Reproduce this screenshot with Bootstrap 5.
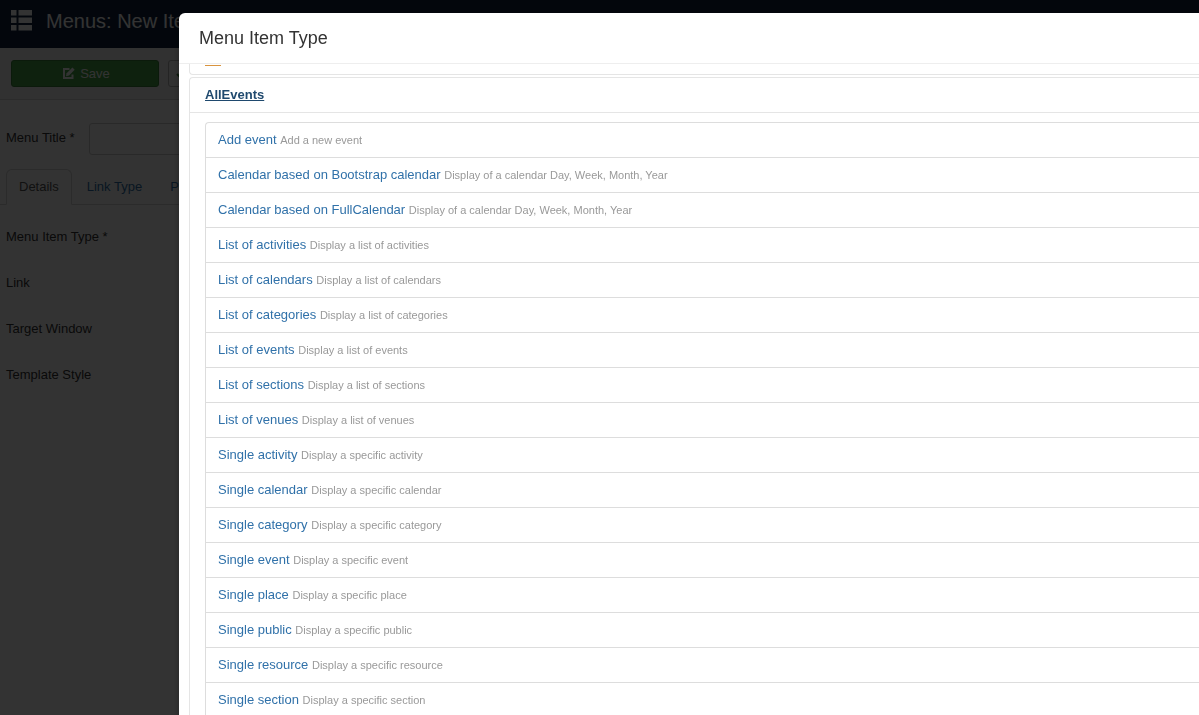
<!DOCTYPE html>
<html lang="en">
<head>
<meta charset="utf-8">
<meta name="viewport" content="width=device-width, initial-scale=1">
<title>Menus: New Item</title>
<link href="https://cdn.jsdelivr.net/npm/bootstrap@5.3.0/dist/css/bootstrap.min.css" rel="stylesheet">
<style>
  body { font: 13px/18px "Liberation Sans", Arial, sans-serif; color: #333; overflow: hidden; }
  a { color: #3071a9; text-decoration: none; }
  .page { height: 100vh; overflow: hidden; }
  .page-header { height: 48px; padding: 0 10px 6px; gap: 14px; background: #10223e; color: #fff; }
  .page-title { font-size: 20px; line-height: 24px; color: #fff; font-weight: 400; }
  .toolbar { height: 52px; padding: 12px 11px; gap: 9px; background: #f5f5f5; border-bottom: 1px solid #d4d4d4; }
  .toolbar .btn { height: 27px; font-size: 13px; line-height: 18px; border-radius: 3px; }
  .btn-save { width: 148px; padding: 0 10px 0 12px; background: #46a546; border: 1px solid #378137; color: #fff; gap: 5px; }
  .btn-plain { width: 140px; padding: 0 7px; background: #f3f3f3; border: 1px solid #b3b3b3; color: #333; }
  .title-row { padding: 23px 6px 14px; gap: 14px; }
  .title-row label { padding-bottom: 2px; white-space: nowrap; }
  .title-row .form-control { width: 300px; height: 32px; border: 1px solid #ccc; border-radius: 3px; font-size: 13px; background: transparent; }
  .nav-tabs { padding-left: 6px; --bs-nav-tabs-border-color: #d4d4d4; }
  .nav-tabs .nav-link { padding: 8px 12px; line-height: 18px; margin-right: 2px; color: #3071a9; }
  .nav-tabs .nav-link.active { color: #555; border-color: #d4d4d4 #d4d4d4 #fff; }
  .field-labels { padding: 23px 6px; gap: 28px; }
  .shade { background: rgba(0, 0, 0, .8); }
  .type-modal { top: 13px; left: 179px; right: 0; bottom: 0; background: #fff; border-radius: 6px 0 0 0; box-shadow: 0 3px 7px rgba(0, 0, 0, .3); overflow: hidden; }
  .type-head { height: 51px; padding: 10px 20px; border-bottom: 1px solid #eee; }
  .type-head h3 { font-size: 18px; line-height: 30px; font-weight: 400; margin: 0; color: #333; }
  .type-body { padding-left: 10px; }
  .group { border: 1px solid #e5e5e5; border-right: 0; border-radius: 4px 0 0 4px; }
  .group-prev { height: 11px; border-top: 0; border-radius: 0 0 0 4px; margin-bottom: 2px; padding-left: 15px; }
  .group-prev span { display: block; width: 16px; height: 2px; border-bottom: 1px solid #d9943f; }
  .group-head { padding: 8px 15px; border-bottom: 1px solid #e5e5e5; font-weight: 700; }
  .group-head a { color: #1f496e; text-decoration: underline; }
  .group-inner { padding: 9px 0 9px 15px; }
  .type-list { border: 1px solid #ddd; border-right: 0; border-radius: 4px 0 0 4px; }
  .type-list li { padding: 8px 12px; }
  .type-list li + li { border-top: 1px solid #ddd; }
  .type-list small { font-size: 11px; line-height: 18px; color: #999; }
</style>
</head>
<body>
<div class="page">
  <header class="page-header d-flex align-items-center">
    <svg width="22" height="22" viewBox="0 0 22 22" fill="#fff" aria-hidden="true"><path d="M1 0h5.500v5.500H1zM8.500 0h13.500v5.500H8.500zM1 7.500h5.500v5.500H1zM8.500 7.500h13.500v5.500H8.500zM1 15h5.500v5.500H1zM8.500 15h13.500v5.500H8.500z"/></svg>
    <h1 class="page-title m-0">Menus: New Item</h1>
  </header>
  <div class="toolbar d-flex">
    <button type="button" class="btn btn-save d-flex align-items-center justify-content-center">
      <svg width="13" height="13" viewBox="0 0 13 13" aria-hidden="true"><path d="M7.500 2H2v9h8.500V7.500" fill="none" stroke="#fff" stroke-width="2"/><path d="M4 9.200l.6-3L10.400.4l2.300 2.300L7 8.600z" fill="#fff"/></svg>
      Save</button>
    <button type="button" class="btn btn-plain d-flex align-items-center" aria-label="Save and close"><svg width="12" height="10" viewBox="0 0 12 10" aria-hidden="true"><path d="M1 5l3 3 7-7" fill="none" stroke="#378137" stroke-width="2"/></svg></button>
  </div>
  <div class="title-row d-flex align-items-center">
    <label for="menu-title">Menu Title *</label>
    <input id="menu-title" type="text" class="form-control">
  </div>
  <ul class="nav nav-tabs flex-nowrap">
    <li class="nav-item"><a class="nav-link active" href="#">Details</a></li>
    <li class="nav-item"><a class="nav-link text-nowrap" href="#">Link Type</a></li>
    <li class="nav-item"><a class="nav-link text-nowrap" href="#">Page Display</a></li>
  </ul>
  <div class="field-labels d-flex flex-column">
    <span>Menu Item Type *</span>
    <span>Link</span>
    <span>Target Window</span>
    <span>Template Style</span>
  </div>
</div>
<div class="shade position-fixed top-0 start-0 w-100 h-100"></div>
<section class="type-modal position-fixed" role="dialog" aria-labelledby="type-title">
  <div class="type-head"><h3 id="type-title">Menu Item Type</h3></div>
  <div class="type-body">
    <div class="group group-prev"><span></span></div>
    <div class="group">
      <div class="group-head"><a href="#">AllEvents</a></div>
      <div class="group-inner">
        <ul class="type-list list-unstyled m-0">
          <li><a href="#">Add event</a> <small>Add a new event</small></li>
          <li><a href="#">Calendar based on Bootstrap calendar</a> <small>Display of a calendar Day, Week, Month, Year</small></li>
          <li><a href="#">Calendar based on FullCalendar</a> <small>Display of a calendar Day, Week, Month, Year</small></li>
          <li><a href="#">List of activities</a> <small>Display a list of activities</small></li>
          <li><a href="#">List of calendars</a> <small>Display a list of calendars</small></li>
          <li><a href="#">List of categories</a> <small>Display a list of categories</small></li>
          <li><a href="#">List of events</a> <small>Display a list of events</small></li>
          <li><a href="#">List of sections</a> <small>Display a list of sections</small></li>
          <li><a href="#">List of venues</a> <small>Display a list of venues</small></li>
          <li><a href="#">Single activity</a> <small>Display a specific activity</small></li>
          <li><a href="#">Single calendar</a> <small>Display a specific calendar</small></li>
          <li><a href="#">Single category</a> <small>Display a specific category</small></li>
          <li><a href="#">Single event</a> <small>Display a specific event</small></li>
          <li><a href="#">Single place</a> <small>Display a specific place</small></li>
          <li><a href="#">Single public</a> <small>Display a specific public</small></li>
          <li><a href="#">Single resource</a> <small>Display a specific resource</small></li>
          <li><a href="#">Single section</a> <small>Display a specific section</small></li>
        </ul>
      </div>
    </div>
  </div>
</section>
<script src="https://cdn.jsdelivr.net/npm/bootstrap@5.3.0/dist/js/bootstrap.bundle.min.js"></script>
</body>
</html>
